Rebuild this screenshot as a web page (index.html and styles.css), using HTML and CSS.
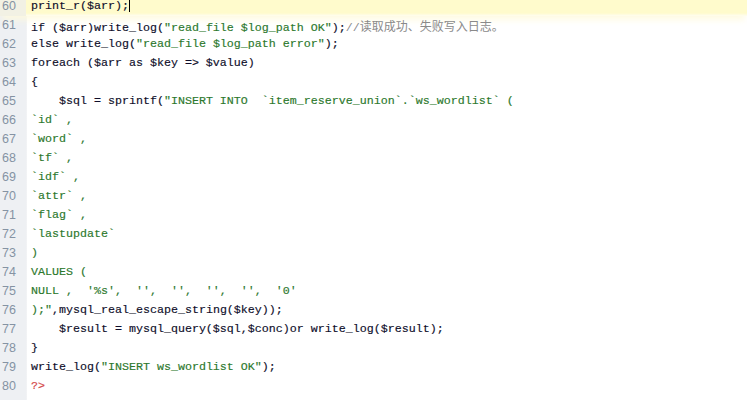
FILE: index.html
```html
<!DOCTYPE html>
<html>
<head>
<meta charset="utf-8">
<link rel="stylesheet" href="styles.css">
</head>
<body>
<div class="editor">
  <div class="lines">
    <div class="row current"><span class="ln">60</span><span class="code">print_r($arr);<span class="caret"></span></span></div>
    <div class="row"><span class="ln">61</span><span class="code">if ($arr)write_log(<span class="s">"read_file $log_path OK"</span>);<span class="c">//<span class="cjk">读取成功、失败写入日志。</span></span></span></div>
    <div class="row"><span class="ln">62</span><span class="code">else write_log(<span class="s">"read_file $log_path error"</span>);</span></div>
    <div class="row"><span class="ln">63</span><span class="code">foreach ($arr as $key =&gt; $value)</span></div>
    <div class="row"><span class="ln">64</span><span class="code">{</span></div>
    <div class="row"><span class="ln">65</span><span class="code">    $sql = sprintf(<span class="s">"INSERT INTO  `item_reserve_union`.`ws_wordlist` (</span></span></div>
    <div class="row"><span class="ln">66</span><span class="code s">`id` ,</span></div>
    <div class="row"><span class="ln">67</span><span class="code s">`word` ,</span></div>
    <div class="row"><span class="ln">68</span><span class="code s">`tf` ,</span></div>
    <div class="row"><span class="ln">69</span><span class="code s">`idf` ,</span></div>
    <div class="row"><span class="ln">70</span><span class="code s">`attr` ,</span></div>
    <div class="row"><span class="ln">71</span><span class="code s">`flag` ,</span></div>
    <div class="row"><span class="ln">72</span><span class="code s">`lastupdate`</span></div>
    <div class="row"><span class="ln">73</span><span class="code s">)</span></div>
    <div class="row"><span class="ln">74</span><span class="code s">VALUES (</span></div>
    <div class="row"><span class="ln">75</span><span class="code s">NULL ,  '%s',  '',  '',  '',  '',  '0'</span></div>
    <div class="row"><span class="ln">76</span><span class="code"><span class="s">);"</span>,mysql_real_escape_string($key));</span></div>
    <div class="row"><span class="ln">77</span><span class="code">    $result = mysql_query($sql,$conc)or write_log($result);</span></div>
    <div class="row"><span class="ln">78</span><span class="code">}</span></div>
    <div class="row"><span class="ln">79</span><span class="code">write_log(<span class="s">"INSERT ws_wordlist OK"</span>);</span></div>
    <div class="row"><span class="ln">80</span><span class="code"><span class="r">?&gt;</span></span></div>
    <div class="row"><span class="ln"></span><span class="code"></span></div>
  </div>
</div>
</body>
</html>
```
FILE: styles.css
```css
html, body {
  margin: 0;
  padding: 0;
  background: #ffffff;
  overflow: hidden;
}
.editor {
  width: 747px;
  height: 400px;
  overflow: hidden;
  background: linear-gradient(to right, #eef0f3 0, #eef0f3 26px, #e4e6ea 26px, #ffffff 27px);
}
.lines {
  margin-top: -3px;
  display: flex;
  flex-direction: column;
}
.row {
  display: flex;
  height: 19px;
  line-height: 19px;
  font-family: "Liberation Mono", "Noto Sans CJK SC", monospace;
  font-size: 11.67px;
  color: #0e0e2a;
  -webkit-text-stroke: 0.15px currentColor;
  white-space: pre;
}
.row.current {
  background: linear-gradient(to bottom, #fffbcc 0, #fffbcc 16px, #fffdf0 19px);
  box-shadow: 0 6px 6px -2px rgba(255, 250, 220, 0.8);
}
.ln {
  width: 26px;
  flex: none;
  box-sizing: border-box;
  padding-left: 2px;
  color: #8593a3;
  font-family: "Liberation Sans", "DejaVu Sans", sans-serif;
  font-size: 12.5px;
  -webkit-text-stroke: 0;
}
.row.current .ln {
  background: #f2f1e4;
}
.code {
  padding-left: 5px;
}
.s { color: #2c782c; }
.c {
  color: #8a8a8a;
  -webkit-text-stroke: 0;
}
.cjk {
  font-family: "Noto Sans CJK SC", sans-serif;
  font-size: 12px;
}
.r { color: #d44a4a; }
.caret {
  display: inline-block;
  width: 1px;
  height: 15px;
  background: #000;
  vertical-align: -3px;
}
```
